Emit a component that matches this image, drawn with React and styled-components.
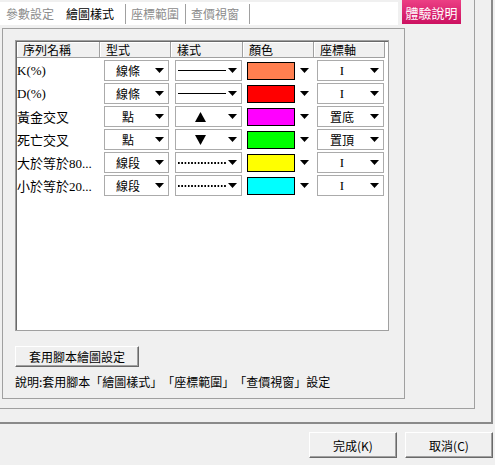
import React from "react";
import styled, { createGlobalStyle } from "styled-components";

const GlobalStyle = createGlobalStyle`
  html, body {
    margin: 0;
    padding: 0;
    background: #f0f0f0;
  }
  body {
    font-family: "Noto Sans CJK TC", "Liberation Sans", sans-serif;
    font-size: 12px;
    color: #000;
    text-spacing-trim: space-all;
  }
`;

const Window = styled.div`
  width: 495px;
  height: 465px;
  overflow: hidden;
  background: #f0f0f0;
  display: flex;
  flex-direction: column;
`;

const Frame = styled.div`
  box-sizing: border-box;
  width: 493px;
  height: 424px;
  border-right: 2px solid #8a8a8a;
  border-bottom: 2px solid #8a8a8a;
`;

const Group = styled.div`
  box-sizing: border-box;
  width: 475px;
  height: 409px;
  border-right: 1px solid #a0a0a0;
  border-bottom: 1px solid #a0a0a0;
  display: flex;
  flex-direction: column;
`;

const TopBar = styled.div`
  display: flex;
  align-items: flex-start;
  height: 28px;
`;

const TabStrip = styled.div`
  margin-top: 2px;
  width: 398px;
  height: 23px;
  background: #fff;
  display: flex;
  align-items: center;
`;

const Tab = styled.div`
  height: 20px;
  line-height: 20px;
  padding: ${(p) => p.$pad};
  color: ${(p) => (p.$active ? "#000" : "#8c8c8c")};
  border-right: ${(p) => (p.$sep ? "1px solid #a0a0a0" : "none")};
  white-space: nowrap;
`;

const PinkButton = styled.div`
  margin-left: 4px;
  width: 59px;
  height: 24px;
  background: linear-gradient(#ec3f84, #cc1160);
  color: #fff;
  font-size: 13px;
  display: flex;
  align-items: center;
  justify-content: center;
  white-space: nowrap;
`;

const Panel = styled.div`
  box-sizing: border-box;
  margin-left: 2px;
  width: 403px;
  height: 371px;
  border: 1px solid #a0a0a0;
  padding: 11px 0 0 12px;
  display: flex;
  flex-direction: column;
  align-items: flex-start;
`;

const Table = styled.div`
  box-sizing: border-box;
  width: 374px;
  height: 291px;
  background: #fff;
  border: 1px solid #a0a0a0;
  box-shadow: inset 1px 1px 0 #696969;
  padding: 1px 0 0 1px;
`;

const cols = "83px 71px 72px 71px 71px";

const HeadRow = styled.div`
  display: grid;
  grid-template-columns: ${cols};
  height: 16px;
`;

const HeadCell = styled.div`
  background: #f0f0f0;
  border-right: 1px solid #a0a0a0;
  border-bottom: 1px solid #a0a0a0;
  box-shadow: inset 1px 1px 0 #fff;
  padding-left: 6px;
  line-height: 15px;
  white-space: nowrap;
`;

const Body = styled.div`
  padding-top: 1px;
`;

const Row = styled.div`
  display: grid;
  grid-template-columns: ${cols};
  height: 23px;
  align-items: center;
`;

const NameCell = styled.div`
  font-family: "Liberation Serif", "Noto Sans CJK TC", serif;
  font-size: 13px;
  white-space: nowrap;
  overflow: hidden;
`;

const Cell = styled.div`
  padding: ${(p) => p.$pad || "0 2px 0 4px"};
  display: flex;
  align-items: center;
`;

const Select = styled.div`
  box-sizing: border-box;
  width: 100%;
  height: 21px;
  background: #fff;
  border: 1px solid #ababab;
  display: flex;
  align-items: center;
  padding-right: 4px;
`;

const Value = styled.div`
  flex: 1;
  display: flex;
  justify-content: center;
  align-items: center;
  font-family: ${(p) =>
    p.$serif ? '"Liberation Serif", serif' : '"Noto Sans CJK TC", sans-serif'};
  font-size: ${(p) => (p.$serif ? "13px" : "12px")};
  line-height: 19px;
`;

const LinePreview = styled.div`
  margin-left: 2px;
  width: 48px;
  height: ${(p) => (p.$dotted ? "2px" : "1px")};
  background: ${(p) =>
    p.$dotted
      ? "linear-gradient(to right, #000 1.5px, transparent 1.5px) 0 0 / 3.3px 2px repeat-x"
      : "#000"};
`;

const Spacer = styled.div`
  flex: 1;
`;

const Swatch = styled.div`
  box-sizing: border-box;
  width: 48px;
  height: 18px;
  border: 1px solid #000;
  background: ${(p) => p.$color};
`;

const ArrowWrap = styled.div`
  margin-left: ${(p) => p.$gap || 0}px;
  display: flex;
`;

const Button = styled.div`
  box-sizing: border-box;
  width: ${(p) => p.$w}px;
  height: ${(p) => p.$h}px;
  background: #f0f0f0;
  border: 1px solid;
  border-color: #fff #696969 #696969 #fff;
  box-shadow: inset -1px -1px 0 #a0a0a0;
  display: flex;
  align-items: center;
  justify-content: center;
  white-space: nowrap;
  font-size: 12px;
`;

const ApplyRow = styled.div`
  margin-top: 15px;
`;

const Note = styled.div`
  margin-top: 7px;
  line-height: 15px;
  white-space: nowrap;
  text-spacing-trim: space-all;
`;

const Footer = styled.div`
  display: flex;
  justify-content: flex-end;
  gap: 8px;
  padding: 8px 2px 0 0;
`;

const Arrow = ({ gap }) => (
  <ArrowWrap $gap={gap}>
    <svg width="9" height="5" viewBox="0 0 9 5">
      <polygon points="0,0 9,0 4.5,5" fill="#000" />
    </svg>
  </ArrowWrap>
);

const Triangle = ({ down }) => (
  <svg width="11" height="10" viewBox="0 0 11 10">
    <polygon
      points={down ? "0,0 11,0 5.5,10" : "0,10 11,10 5.5,0"}
      fill="#000"
    />
  </svg>
);

const rows = [
  { name: "K(%)", type: "線條", style: "solid", color: "#ff7f50", axis: "I" },
  { name: "D(%)", type: "線條", style: "solid", color: "#ff0000", axis: "I" },
  { name: "黃金交叉", type: "點", style: "up", color: "#ff00ff", axis: "置底" },
  { name: "死亡交叉", type: "點", style: "down", color: "#00ff00", axis: "置頂" },
  { name: "大於等於80...", type: "線段", style: "dotted", color: "#ffff00", axis: "I" },
  { name: "小於等於20...", type: "線段", style: "dotted", color: "#00ffff", axis: "I" },
];

const StyleSelect = ({ kind }) => {
  if (kind === "up" || kind === "down") {
    return (
      <Select>
        <Value>
          <Triangle down={kind === "down"} />
        </Value>
        <Arrow gap={4} />
      </Select>
    );
  }
  return (
    <Select>
      <LinePreview $dotted={kind === "dotted"} />
      <Spacer />
      <Arrow />
    </Select>
  );
};

const App = () => {
  return (
    <Window>
      <GlobalStyle />
      <Frame>
        <Group>
          <TopBar>
            <TabStrip>
              <Tab $pad="0 6px 0 6px">參數設定</Tab>
              <Tab $pad="0 11px 0 6px" $active $sep>
                繪圖樣式
              </Tab>
              <Tab $pad="0 6px 0 5px" $sep>
                座標範圍
              </Tab>
              <Tab $pad="0 10px 0 5px" $sep>
                查價視窗
              </Tab>
            </TabStrip>
            <PinkButton>體驗說明</PinkButton>
          </TopBar>
          <Panel>
            <Table>
              <HeadRow>
                <HeadCell>序列名稱</HeadCell>
                <HeadCell>型式</HeadCell>
                <HeadCell>樣式</HeadCell>
                <HeadCell>顏色</HeadCell>
                <HeadCell>座標軸</HeadCell>
              </HeadRow>
              <Body>
                {rows.map((r) => (
                  <Row key={r.name}>
                    <NameCell>{r.name}</NameCell>
                    <Cell>
                      <Select>
                        <Value>{r.type}</Value>
                        <Arrow gap={4} />
                      </Select>
                    </Cell>
                    <Cell $pad="0 1px 0 4px">
                      <StyleSelect kind={r.style} />
                    </Cell>
                    <Cell>
                      <Swatch $color={r.color} />
                      <Arrow gap={5} />
                    </Cell>
                    <Cell $pad="0 1px 0 3px">
                      <Select>
                        <Value $serif={r.axis === "I"}>{r.axis}</Value>
                        <Arrow gap={4} />
                      </Select>
                    </Cell>
                  </Row>
                ))}
              </Body>
            </Table>
            <ApplyRow>
              <Button $w={124} $h={21}>
                套用腳本繪圖設定
              </Button>
            </ApplyRow>
            <Note>說明:套用腳本「繪圖樣式」「座標範圍」「查價視窗」設定</Note>
          </Panel>
        </Group>
      </Frame>
      <Footer>
        <Button $w={88} $h={26}>
          完成(K)
        </Button>
        <Button $w={88} $h={26}>
          取消(C)
        </Button>
      </Footer>
    </Window>
  );
};

export default App;
